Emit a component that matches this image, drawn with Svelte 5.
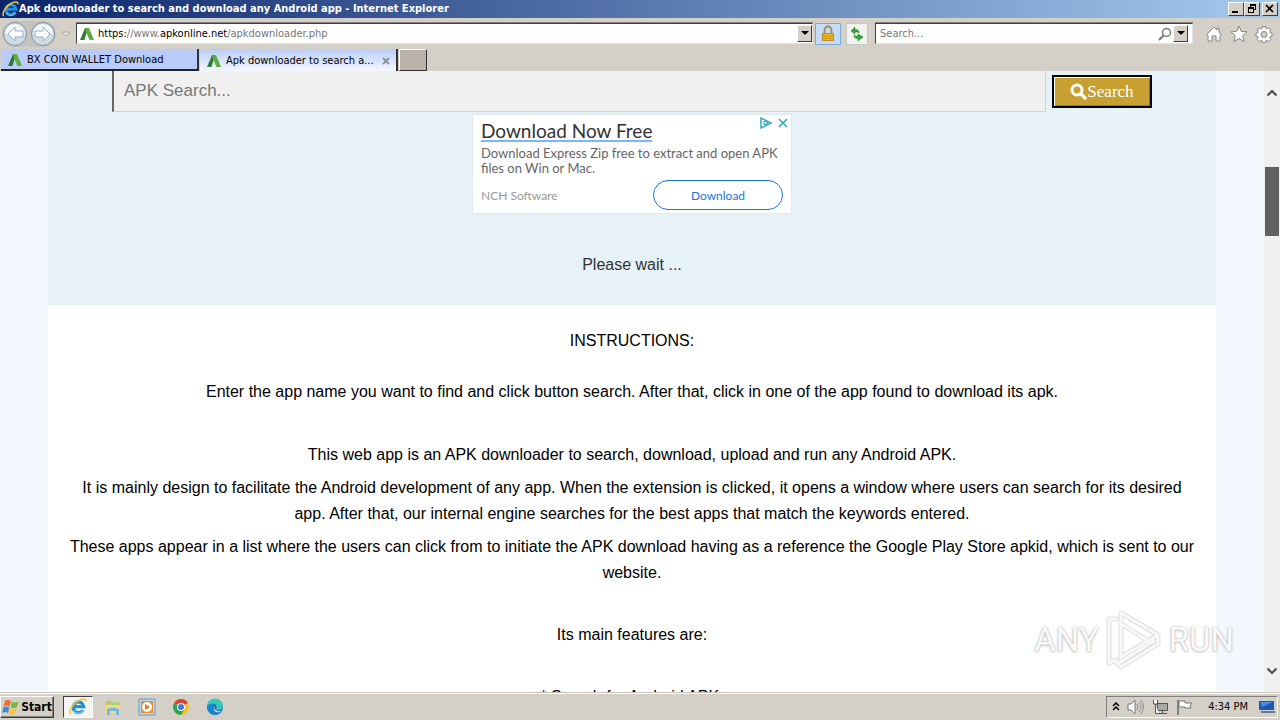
<script>
  const intro = [
    'This web app is an APK downloader to search, download, upload and run any Android APK.',
    'It is mainly design to facilitate the Android development of any app. When the extension is clicked, it opens a window where users can search for its desired app. After that, our internal engine searches for the best apps that match the keywords entered.',
    'These apps appear in a list where the users can click from to initiate the APK download having as a reference the Google Play Store apkid, which is sent to our website.'
  ];
</script>

{#snippet leaf()}
  <svg class="leaf" width="14" height="14" viewBox="0 0 14 14" aria-hidden="true">
    <path d="M5 1h3L4.500 13H0z" fill="#2f7d3b" /><path d="M5.500 1H9l5 12H9.500L6 5z" fill="#5fae3c" />
  </svg>
{/snippet}

{#snippet ie(size)}
  <svg width={size} height={size} viewBox="0 0 18 18" aria-hidden="true">
    <path d="M14 12a5.3 5.3 0 1 1 .7-3.3H4.5" fill="none" stroke="#1f8fe0" stroke-width="3.2" />
    <path d="M14 12a5.3 5.3 0 0 1-9.5.5" fill="none" stroke="#62c7f5" stroke-width="1.4" />
    <path d="M2 16C-1 14 4 5 10 2.400c4-2 7-2 7 1" fill="none" stroke="#f4c531" stroke-width="1.6" />
  </svg>
{/snippet}

<div class="window">
  <header class="title">
    {@render ie(17)}
    <h1>Apk downloader to search and download any Android app - Internet Explorer</h1>
    <button class="cap" aria-label="Minimize"><svg width="10" height="10" viewBox="0 0 10 10"><path d="M1 7h6v2H1z" /></svg></button>
    <button class="cap" aria-label="Restore"><svg width="10" height="10" viewBox="0 0 10 10"><path d="M3 0h6v6H7V5h1V2H4v1H3zM1 3h6v6H1zM2 5v3h4V5z" fill-rule="evenodd" /></svg></button>
    <button class="cap close" aria-label="Close"><svg width="10" height="10" viewBox="0 0 10 10"><path d="M1 1l7 7M8 1L1 8" stroke="#000" stroke-width="1.700" /></svg></button>
  </header>

  <nav class="tools" aria-label="Navigation">
    <div class="travel">
      <button aria-label="Back"><svg width="26" height="26" viewBox="0 0 26 26"><circle cx="13" cy="13" r="11.500" fill="#cfdce6" stroke="#7f909f" /><path d="M3 13a10 10 0 0 1 20 0z" fill="#f2f6fa" /><path d="M13 6l-7 7 7 7v-4h8v-6h-8z" fill="#fff" stroke="#9badbd" /></svg></button>
      <button aria-label="Forward"><svg width="26" height="26" viewBox="0 0 26 26"><circle cx="13" cy="13" r="11.500" fill="#cfdce6" stroke="#7f909f" /><path d="M3 13a10 10 0 0 1 20 0z" fill="#f2f6fa" /><path d="M13 6l7 7-7 7v-4H5v-6h8z" fill="#fff" stroke="#9badbd" /></svg></button>
    </div>
    <button class="recent" aria-label="Recent pages"><svg width="10" height="6" viewBox="0 0 10 6"><path d="M1 1h8L5 5z" fill="#e9e6df" stroke="#aaa69f" /></svg></button>
    <div class="field address">
      {@render leaf()}
      <div class="url">https:<i>//www.</i>apkonline.net<i>/apkdownloader.php</i></div>
      <button class="drop" aria-label="Show address list"><svg width="8" height="5" viewBox="0 0 8 5"><path d="M0 0h8L4 4z" /></svg></button>
    </div>
    <button class="mini lock" aria-label="Security report"><svg width="16" height="18" viewBox="0 0 16 18"><path d="M4.500 9V5a3.500 3.500 0 0 1 7 0v4" fill="none" stroke="#a08a4e" stroke-width="1.800" /><path d="M2.500 8.500h11v7h-11z" fill="#f3b51f" stroke="#c48a1c" /><path d="M3 11h10M3 13.500h10" stroke="#d1921a" /></svg></button>
    <button class="mini" aria-label="Refresh"><svg width="16" height="16" viewBox="0 0 16 16"><path d="M5 2L1 6h2.500c0 3 1 4 3.500 4-1-1-1-2-1-4h2zM11 14l4-5h-2.500c0-3-1-4-3.500-4 1 1 1 2 1 4H8z" transform="matrix(-1 0 0 1 16 0) rotate(90 8 8)" fill="#36a23f" stroke="#1d7d2c" stroke-width=".5" /></svg></button>
    <div class="field find">
      <input aria-label="Search the web" placeholder="Search..." />
      <svg width="14" height="14" viewBox="0 0 14 14" aria-hidden="true"><circle cx="8.500" cy="5.500" r="4" fill="none" stroke="#777" stroke-width="1.500" /><path d="M5.500 8.500L1 13" stroke="#777" stroke-width="2" /></svg>
      <button class="drop" aria-label="Search options"><svg width="8" height="5" viewBox="0 0 8 5"><path d="M0 0h8L4 4z" /></svg></button>
    </div>
    <div class="menu">
      <button aria-label="Home"><svg width="18" height="18" viewBox="0 0 18 18"><path d="M9 2L1.500 9.500 3 10.500V16h4v-5h4v5h4v-5.500l1.500-1L14 7V3h-2v2z" fill="#fff" stroke="#858585" /></svg></button>
      <button aria-label="Favorites"><svg width="18" height="18" viewBox="0 0 18 18"><path d="M9 1l2.300 5.300 5.700.6-4.300 3.800L14 16.500 9 13.500l-5 3 1.300-5.800L1 6.900l5.700-.6z" fill="#fff" stroke="#858585" /></svg></button>
      <button aria-label="Tools"><svg width="18" height="18" viewBox="0 0 18 18"><path d="M7.500 1.500h3l.4 2 1.200.5 1.700-1.200 2.100 2.100-1.200 1.700.5 1.200 1.800.4v3l-1.800.4-.5 1.200 1.200 1.700-2.100 2.100-1.700-1.200-1.200.5-.4 1.600h-3l-.4-1.600-1.200-.5-1.700 1.200-2.100-2.100 1.200-1.700-.5-1.200L1 11.200v-3l1.800-.4.500-1.200-1.200-1.700 2.100-2.100L5.900 4l1.200-.5z" fill="#fff" stroke="#858585" /><circle cx="9" cy="9.500" r="3" fill="#d4d0c8" stroke="#858585" /></svg></button>
    </div>
  </nav>

  <div class="tabs">
    <div class="tab">{@render leaf()}<span>BX COIN WALLET Download</span></div>
    <div class="tab active">{@render leaf()}<span>Apk downloader to search a...</span><button aria-label="Close tab"><svg width="8" height="8" viewBox="0 0 8 8"><path d="M1 1l6 6M7 1L1 7" stroke="#8b8f96" stroke-width="1.800" /></svg></button></div>
    <button class="new" aria-label="New tab"></button>
  </div>

  <div class="view">
    <main>
      <section class="top">
        <form onsubmit={(e) => e.preventDefault()}>
          <input aria-label="APK Search" placeholder="APK Search..." />
          <button><svg width="17" height="17" viewBox="0 0 17 17" aria-hidden="true"><circle cx="7" cy="7" r="5" fill="none" stroke="#fff" stroke-width="3" /><path d="M10.500 10.500l4.500 4.500" stroke="#fff" stroke-width="3.200" stroke-linecap="round" /></svg>Search</button>
        </form>
        <aside>
          <div class="adhead">
            <a href="#download">Download Now Free</a>
            <svg width="30" height="12" viewBox="0 0 30 12" aria-hidden="true"><path d="M2 1v10l10-5z" fill="none" stroke="#25a9c0" stroke-width="1.400" /><path d="M5 4v4l4-2z" fill="#fff" stroke="#25a9c0" /><path d="M20 2l8 8M28 2l-8 8" stroke="#25a9c0" stroke-width="1.500" /></svg>
          </div>
          <p>Download Express Zip free to extract and open APK files on Win or Mac.</p>
          <div class="adfoot"><span>NCH Software</span><button>Download</button></div>
        </aside>
        <p class="wait">Please wait ...</p>
      </section>
      <section class="text">
        <p>INSTRUCTIONS:</p>
        <p class="how">Enter the app name you want to find and click button search. After that, click in one of the app found to download its apk.</p>
        <div class="intro">
          {#each intro as line}<p>{line}</p>{/each}
        </div>
        <p class="far">Its main features are:</p>
        <p class="far">* Search for Android APK.</p>
      </section>
    </main>
    <div class="scroll">
      <svg width="12" height="8" viewBox="0 0 12 8" aria-hidden="true"><path d="M1.500 6.500L6 2l4.500 4.500" fill="none" stroke="#505050" stroke-width="2.200" /></svg>
      <div class="thumb"></div>
      <svg width="12" height="8" viewBox="0 0 12 8" aria-hidden="true"><path d="M1.500 1.500L6 6l4.500-4.500" fill="none" stroke="#505050" stroke-width="2.200" /></svg>
    </div>
    <div class="mark">
      <span>ANY</span>
      <svg width="60" height="64" viewBox="0 0 60 64" aria-hidden="true">
        <g fill="none" stroke-linejoin="round" stroke-linecap="round">
          <path d="M17 50V5l37 22-37 22M12 11H5v44l7-3M19 17l27 17M12 54l5 5 37-23v-7M15 55l35-22" stroke="#dedede" stroke-width="5" />
          <path d="M17 50V5l37 22-37 22M12 11H5v44l7-3M19 17l27 17M12 54l5 5 37-23v-7M15 55l35-22" stroke="#f8f8f8" stroke-width="3" />
        </g>
      </svg>
      <span>RUN</span>
    </div>
  </div>

  <footer>
    <button class="start"><svg width="18" height="18" viewBox="0 0 18 18" aria-hidden="true"><path d="M3 3c2-1.500 4-1.500 6 0L7.500 8.500c-2-1.500-4-1.500-6 0z" fill="#ee6a31" /><path d="M10 3.500c2 1.300 4 1.300 6.500 0L15 9c-2 1.300-4 1.300-6.500 0z" fill="#79b843" /><path d="M1.300 9.500c2-1.500 4-1.500 6 0L6 15c-2-1.500-4-1.500-6 0z" fill="#4289d8" /><path d="M8.300 10c2 1.300 4 1.300 6.400 0l-1.500 5.500c-2 1.300-4 1.300-6.400 0z" fill="#f7c535" /></svg>Start</button>
    <div class="apps">
      <button class="on" aria-label="Internet Explorer">{@render ie(18)}</button>
      <button aria-label="File Explorer"><svg width="18" height="18" viewBox="0 0 18 18"><path d="M2 3h5l1 2h8v9H2z" fill="#dcb84e" /><path d="M4 4h10v5H4z" fill="#a8cf7a" /><path d="M2 7h14v8H2z" fill="#f3dc83" /><path d="M3 17v-6q6-3 12 0v6h-3v-4H6v4z" fill="#71b9df" /></svg></button>
      <button aria-label="Media Player"><svg width="18" height="18" viewBox="0 0 18 18"><path d="M1 1h16v16H1z" fill="#b8d9ef" stroke="#5c9bc9" /><path d="M3 3h12v12H3z" fill="#f18a20" /><circle cx="9" cy="9" r="5" fill="#fff" /><path d="M7 6v6l5-3z" fill="#e57812" /></svg></button>
      <button aria-label="Chrome"><svg width="18" height="18" viewBox="0 0 18 18"><circle cx="9" cy="9" r="8" fill="#f6c52c" /><path d="M9 9L2.100 5A8 8 0 0 1 15.900 5z" fill="#df4132" /><path d="M9 9L2.100 5A8 8 0 0 0 9 17l3.500-6z" fill="#2fa24c" /><circle cx="9" cy="9" r="4" fill="#fff" /><circle cx="9" cy="9" r="3" fill="#3d7de5" /></svg></button>
      <button aria-label="Edge"><svg width="18" height="18" viewBox="0 0 18 18"><circle cx="9" cy="9" r="8" fill="#1473c5" /><path d="M1 9a8 8 0 0 1 16-1c0 4-5 5-7 3 2-3-1-6-4-5-3 .500-5 2-5 3z" fill="#36c7b7" /><path d="M1 9c2-4 7-4 8-1-3 1-2 6 2 8.500A8 8 0 0 1 1 9z" fill="#1687d4" /><path d="M9 8c-2 2 1 6 6 5l-1 1c-5 2-8-3-5-6z" fill="#d4d0c8" /></svg></button>
    </div>
    <div class="tray">
      <svg width="8" height="10" viewBox="0 0 8 10" aria-hidden="true"><path d="M1 4l3-3 3 3M1 8l3-3 3 3" fill="none" stroke="#000" stroke-width="1.500" /></svg>
      <svg width="18" height="16" viewBox="0 0 18 16" aria-hidden="true"><path d="M1 5h3l4-4v14l-4-4H1z" fill="#fff" stroke="#777" /><path d="M10 5q2 3 0 6M12 3q4 5 0 10M14 1q5 7 0 14" fill="none" stroke="#8b8b8b" /></svg>
      <svg width="17" height="16" viewBox="0 0 17 16" aria-hidden="true"><path d="M5.500 4.500h10v7h-10z" fill="#aaa" stroke="#555" /><path d="M6 14.500h9M10.500 12v2" stroke="#555" /><path d="M1.500 1v4h4V1M3.500 5v9.500H7" fill="#fff" stroke="#555" /></svg>
      <svg width="17" height="16" viewBox="0 0 17 16" aria-hidden="true"><path d="M2 1v15" stroke="#666" stroke-width="1.500" /><path d="M3 2h6v2h7l-2 3 1 2H9V8H3z" fill="#fff" stroke="#777" /></svg>
      <time>4:34 PM</time>
      <svg width="16" height="14" viewBox="0 0 16 14" aria-hidden="true"><path d="M0 1h15v9H0z" fill="#1d58b5" /><path d="M1 2h13L3 7z" fill="#438de0" /><path d="M2 12h14" stroke="#657a94" stroke-width="2" /></svg>
    </div>
  </footer>
</div>

<style>
  :global(body) { margin: 0; }
  * { box-sizing: border-box; }
  svg { display: block; flex: none; }
  button, input { font: inherit; padding: 0; border: 0; background: none; }
  button { display: flex; align-items: center; justify-content: center; flex: none; color: inherit; }
  p, h1 { margin: 0; }
  .window { display: flex; flex-direction: column; height: 100vh; overflow: hidden; background: #d4d0c8; color: #000; font: 11px/14px "DejaVu Sans Condensed", Tahoma, sans-serif; }
  .title { display: flex; align-items: center; height: 18px; flex: none; padding: 0 2px; background: linear-gradient(90deg, #0a246a, #a6caf0); }
  h1 { flex: 1; color: #fff; font-size: 11px; line-height: 16px; white-space: nowrap; }
  .cap { width: 16px; height: 14px; background: #d4d0c8; border: 1px solid; border-color: #fff #404040 #404040 #fff; }
  .close { margin-left: 2px; }
  .tools { display: flex; align-items: center; height: 31px; flex: none; padding: 0 7px 0 2px; }
  .travel { display: flex; gap: 2px; border-radius: 14px; background: #c4c3c1; }
  .recent { width: 20px; }
  .field { display: flex; align-items: center; height: 21px; background: #fff; border: 1px solid; border-color: #404040 #e4e1db #e4e1db #404040; box-shadow: 0 -1px #808080; }
  .address { flex: 1; padding-left: 3px; gap: 4px; }
  .url { flex: 1; white-space: nowrap; }
  i { font-style: normal; color: #777; }
  .drop { width: 15px; height: 17px; background: #d4d0c8; border: 1px solid; border-color: #fff #404040 #404040 #fff; }
  .mini { width: 22px; height: 22px; margin-left: 5px; border: 1px solid #c2c9c6; background: #f0f3ee; }
  .lock { width: 26px; margin-left: 2px; background: #c5dcf9; border-color: #7da8de; }
  .find { width: 318px; margin-left: 7px; padding: 0 4px; gap: 1px; }
  .find input { flex: 1; min-width: 0; outline: 0; }
  input::placeholder { color: #777; opacity: 1; }
  .menu { display: flex; gap: 7px; margin-left: 12px; }
  .tabs { display: flex; height: 22px; flex: none; padding-left: 1px; gap: 1px; }
  .tab { display: flex; align-items: center; gap: 5px; width: 198px; padding: 2px 6px 0 7px; background: #b9cbfa; border-right: 2px solid #303030; border-bottom: 2px solid #222; }
  .tab span { flex: 1; white-space: nowrap; }
  .active { background: linear-gradient(#b9cbfa, #f4f8ff); border-bottom: 0; }
  .new { width: 28px; background: #bbb3aa; border: 1px solid; border-color: #fff #303030 #303030 #fff; }
  .view { position: relative; display: flex; flex: 1; min-height: 0; overflow: hidden; background: #f3f8ff; }
  main { flex: 1; min-width: 0; padding: 0 48px; overflow: hidden; background: #f3f8ff; font: 16px/26px "Liberation Sans", Arial, sans-serif; text-align: center; }
  .top { background: #e7f1f8; padding: 0 64px 27px; color: #333; }
  form { display: flex; align-items: flex-start; gap: 6px; }
  form input { flex: 1; min-width: 0; height: 41px; padding: 0 10px; font-size: 17px; color: #777; background: #f0f0f0; border: 1px solid #d0d0d0; border-width: 0 1px 1px 2px; border-left-color: #666; }
  form button { width: 100px; height: 33px; margin-top: 4px; background: #c8a032; color: #fff; border: 2px solid #000; box-shadow: inset 1px 1px #fff, inset -1px -1px #777; font: 17px/20px "Liberation Serif", serif; }
  aside { width: 320px; margin: 2px auto 0; padding: 2px 8px 3px; background: #fff; border: 1px solid #e0e9ee; text-align: left; color: #666; font: 12px/15px Lato, sans-serif; }
  .adhead { display: flex; justify-content: space-between; }
  .adhead svg { margin-right: -6px; }
  a { display: block; margin-top: 4px; color: #333; font-size: 19px; line-height: 19px; text-decoration: none; border-bottom: 2px solid #78b8ff; }
  aside p { margin-top: 4px; font-size: 13px; }
  .adfoot { display: flex; align-items: center; justify-content: space-between; margin-top: 4px; color: #999; }
  .adfoot button { width: 130px; height: 30px; border: 1px solid #1a73d8; border-radius: 15px; color: #1a73e8; }
  .wait { margin-top: 38px; }
  .text { min-height: 500px; padding: 23px 20px 0; background: #fff; color: #000; }
  .how { margin-top: 25px; }
  .intro { display: flex; flex-direction: column; gap: 7px; margin-top: 37px; }
  .far { margin-top: 36px; }
  .scroll { display: flex; flex-direction: column; align-items: center; width: 16px; padding: 18px 0 17px; background: #f0f0f0; }
  .thumb { width: 14px; height: 69px; margin: 70px 0 auto; background: #606060; }
  .mark { position: absolute; right: 46px; bottom: 20px; display: flex; align-items: center; gap: 5px; color: #fafafa; font: 33px/44px Roboto, sans-serif; text-shadow: 0 0 2px #aaa, 0 1px 3px #ccc; }
  footer { display: flex; align-items: center; flex: none; height: 28px; padding: 1px 2px 0 0; border-top: 1px solid #c9c5bd; box-shadow: inset 0 1px #fff; }
  .start { width: 54px; height: 22px; gap: 1px; border: 1px solid; border-color: #fff #404040 #404040 #fff; box-shadow: inset -1px -1px #808080; font-size: 12px; font-weight: bold; }
  .apps { display: flex; flex: 1; gap: 6px; margin-left: 9px; }
  .apps button { width: 28px; height: 22px; }
  .apps .on { width: 30px; background: #f5f4f1; border: 1px solid; border-color: #404040 #fff #fff #404040; }
  .tray { display: flex; align-items: center; gap: 7px; height: 22px; padding: 0 2px 0 5px; border: 1px solid; border-color: #808080 #fff #fff #808080; }
  time { margin: 0 4px 0 8px; }
</style>
